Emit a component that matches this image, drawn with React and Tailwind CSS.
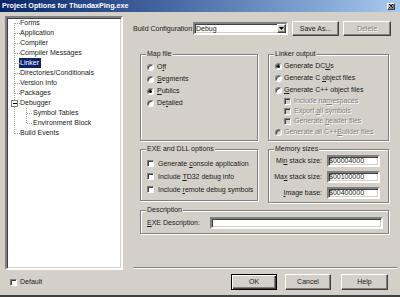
import React from "react";

const U = ({ children }) => <span className="underline underline-offset-[1px]">{children}</span>;

const SUNKEN =
  "border-2 border-t-[#808080] border-l-[#808080] border-b-white border-r-white shadow-[inset_1px_1px_0_#404040,inset_-1px_-1px_0_#d4d0c8]";
const RAISED =
  "border border-t-white border-l-white border-r-[#404040] border-b-[#404040] shadow-[inset_-1px_-1px_0_#808080]";
const DIS = "text-[#808080] [text-shadow:1px_1px_0_#fff]";

function Radio({ checked, disabled }) {
  return (
    <span
      className={`flex items-center justify-center w-[7px] h-[7px] shrink-0 rounded-full border border-t-[#808080] border-l-[#808080] border-b-white border-r-white shadow-[inset_1px_1px_0_#404040] ${
        disabled ? "bg-[#d4d0c8]" : "bg-white"
      }`}
    >
      {checked && <span className="w-[3px] h-[3px] rounded-full bg-black" />}
    </span>
  );
}

function Check({ disabled }) {
  return (
    <span
      className={`block w-[7px] h-[7px] shrink-0 border border-t-[#808080] border-l-[#808080] border-b-white border-r-white shadow-[inset_1px_1px_0_#404040] ${
        disabled ? "bg-[#d4d0c8]" : "bg-white"
      }`}
    />
  );
}

function Group({ label, className, children }) {
  return (
    <div
      className={`relative border border-[#808080] shadow-[inset_1px_1px_0_#fff,1px_1px_0_#fff] ${className}`}
    >
      <span className="absolute -top-[6px] left-[5px] bg-[#d4d0c8] px-[1px] leading-[10px]">{label}</span>
      {children}
    </div>
  );
}

function Button({ children, className = "", disabled }) {
  return (
    <div className={`flex items-center justify-center bg-[#d4d0c8] ${RAISED} ${className}`}>
      <span className={disabled ? DIS : ""}>{children}</span>
    </div>
  );
}

const treeItems = [
  { t: "Forms" },
  { t: "Application" },
  { t: "Compiler" },
  { t: "Compiler Messages" },
  { t: "Linker", sel: true },
  { t: "Directories/Conditionals" },
  { t: "Version Info" },
  { t: "Packages" },
  { t: "Debugger" },
  { t: "Symbol Tables", child: true },
  { t: "Environment Block", child: true },
  { t: "Build Events" },
];

function Tree() {
  const lc = "#a0a0a0";
  return (
    <div className={`ml-[5px] mt-[4px] w-[118px] h-[254px] bg-white ${SUNKEN}`}>
      <div className="relative">
        <svg className="absolute left-0 top-0" width="40" height="120" shapeRendering="crispEdges">
          <line x1="7.5" y1="5" x2="7.5" y2="116" stroke={lc} strokeDasharray="1 1" />
          {treeItems.map((it, i) =>
            it.child ? null : (
              <line key={i} x1="8" y1={i * 10 + 5.5} x2="13" y2={i * 10 + 5.5} stroke={lc} strokeDasharray="1 1" />
            )
          )}
          <line x1="19.5" y1="90" x2="19.5" y2="106" stroke={lc} strokeDasharray="1 1" />
          <line x1="20" y1="95.5" x2="25" y2="95.5" stroke={lc} strokeDasharray="1 1" />
          <line x1="20" y1="105.5" x2="25" y2="105.5" stroke={lc} strokeDasharray="1 1" />
          <rect x="4.5" y="82.5" width="6" height="6" fill="#fff" stroke="#808080" />
          <line x1="5.5" y1="85.5" x2="9.5" y2="85.5" stroke="#000" />
        </svg>
        {treeItems.map((it, i) => (
          <div key={i} className={`h-[10px] leading-[10px] flex ${it.child ? "pl-[26px]" : "pl-[13px]"}`}>
            <span className={it.sel ? "bg-[#0a246a] text-white pl-[1px] pr-[2px] -ml-[1px]" : ""}>{it.t}</span>
          </div>
        ))}
      </div>
    </div>
  );
}

function Edit({ value, className = "" }) {
  return (
    <div className={`h-[12px] bg-white ${SUNKEN} flex items-center leading-[8px] ${className}`}>
      <span>{value}</span>
    </div>
  );
}

export default function App() {
  return (
    <div className="w-[400px] h-[297px] bg-[#d4d0c8] flex flex-col overflow-hidden border-b-2 border-b-[#404040] font-['Liberation_Sans',Arial,sans-serif] text-[7px] leading-[10px] text-[#1a1a1a]">
      {/* Title bar */}
      <div className="h-[12px] shrink-0 flex items-center bg-linear-to-r from-[#0a246a] to-[#a6caf0] pl-[2px] pr-[5px]">
        <span className="text-white font-bold text-[7.2px] leading-[12px]">Project Options for ThundaxPing.exe</span>
        <div className={`ml-auto w-[8px] h-[7px] bg-[#d4d0c8] ${RAISED} flex items-center justify-center`}>
          <svg width="4" height="4" viewBox="0 0 4 4">
            <path d="M0 0L4 4M4 0L0 4" stroke="#000" strokeWidth="1.1" />
          </svg>
        </div>
      </div>

      {/* Body */}
      <div className="flex h-[258px] shrink-0">
        <Tree />
        <div className="ml-[10px] w-[264px] flex flex-col">
          {/* Build configuration */}
          <div className="mt-[9px] h-[15px] flex items-center">
            <span className="w-[60px]">Build Configuration</span>
            <div className={`w-[95px] h-[13px] bg-white ${SUNKEN} flex items-center`}>
              <span className="pl-[1px] flex-1">Debug</span>
              <div className={`w-[9px] h-full bg-[#d4d0c8] ${RAISED} flex items-center justify-center`}>
                <svg width="5" height="3" viewBox="0 0 5 3">
                  <path d="M0 0H5L2.5 3Z" fill="#000" />
                </svg>
              </div>
            </div>
            <Button className="ml-[4px] w-[47px] h-[15px]">Save As...</Button>
            <Button className="ml-[4px] w-[48px] h-[15px]" disabled>
              Delete
            </Button>
          </div>

          {/* Row 1 */}
          <div className="mt-[18px] pl-[7px] flex">
            <Group label="Map file" className="w-[118px] h-[87px] pt-[6px] pl-[6px]">
              {[
                [<>O<U>f</U>f</>, false],
                [<><U>S</U>egments</>, false],
                [<><U>P</U>ublics</>, true],
                [<>De<U>t</U>ailed</>, false],
              ].map(([t, c], i) => (
                <div key={i} className="h-[12px] flex items-center">
                  <Radio checked={c} />
                  <span className="ml-[3px]">{t}</span>
                </div>
              ))}
            </Group>
            <Group label="Linker output" className="ml-[10px] w-[121px] h-[87px] pt-[5px] pl-[6px]">
              <div className="h-[12px] flex items-center">
                <Radio checked />
                <span className="ml-[2px]">Generate DC<U>U</U>s</span>
              </div>
              <div className="h-[12px] flex items-center">
                <Radio />
                <span className="ml-[2px]">Generate C <U>o</U>bject files</span>
              </div>
              <div className="h-[12px] flex items-center">
                <Radio />
                <span className="ml-[2px]"><U>G</U>enerate C++ object files</span>
              </div>
              {[
                <>Include na<U>m</U>espaces</>,
                <>Export <U>a</U>ll symbols</>,
                <>Generate <U>h</U>eader files</>,
              ].map((t, i) => (
                <div key={i} className="h-[10px] flex items-center pl-[9px]">
                  <Check disabled />
                  <span className={`ml-[3px] ${DIS}`}>{t}</span>
                </div>
              ))}
              <div className="h-[12px] flex items-center">
                <Radio disabled />
                <span className={`ml-[2px] ${DIS}`}>Generate all C++<U>B</U>uilder files</span>
              </div>
            </Group>
          </div>

          {/* Row 2 */}
          <div className="mt-[8px] pl-[7px] flex items-start">
            <Group label="EXE and DLL options" className="w-[118px] h-[52px] pt-[7px] pl-[6px]">
              {[
                <>Generate <U>c</U>onsole application</>,
                <>Include <U>T</U>D32 debug info</>,
                <>Include <U>r</U>emote debug symbols</>,
              ].map((t, i) => (
                <div key={i} className="h-[13px] flex items-center">
                  <Check />
                  <span className="ml-[4px]">{t}</span>
                </div>
              ))}
            </Group>
            <Group label="Memory sizes" className="ml-[10px] w-[121px] h-[54px] pt-[5px] flex flex-col gap-[4px]">
              {[
                [<>Mi<U>n</U> stack size:</>, "$00004000"],
                [<>Ma<U>x</U> stack size:</>, "$00100000"],
                [<><U>I</U>mage base:</>, "$00400000"],
              ].map(([l, v], i) => (
                <div key={i} className="h-[12px] flex items-center">
                  <span className="w-[53px] text-right">{l}</span>
                  <Edit value={v} className="ml-[5px] w-[53px]" />
                </div>
              ))}
            </Group>
          </div>

          {/* Description */}
          <div className="mt-[7px] pl-[7px]">
            <Group label="Description" className="w-[249px] h-[24px] pt-[6px] pl-[6px] flex">
              <div className="h-[12px] flex items-center">
                <span className="w-[63px]"><U>E</U>XE Description:</span>
                <Edit value="" className="w-[173px]" />
              </div>
            </Group>
          </div>

          <div className="mt-[33px] h-[2px] border-t border-t-[#808080] border-b border-b-white" />
        </div>
      </div>

      {/* Footer */}
      <div className="mt-[4px] h-[16px] flex items-center pl-[10px] pr-[12px]">
        <Check />
        <span className="ml-[3px]">Default</span>
        <div className="ml-auto flex items-center">
          <div className="w-[46px] h-[16px] border border-black bg-[#d4d0c8] flex items-center justify-center shadow-[inset_1px_1px_0_#fff,inset_-1px_-1px_0_#404040,inset_-2px_-2px_0_#808080]">
            OK
          </div>
          <Button className="ml-[8px] w-[46px] h-[16px]">Cancel</Button>
          <Button className="ml-[10px] w-[47px] h-[16px]">Help</Button>
        </div>
      </div>
    </div>
  );
}
